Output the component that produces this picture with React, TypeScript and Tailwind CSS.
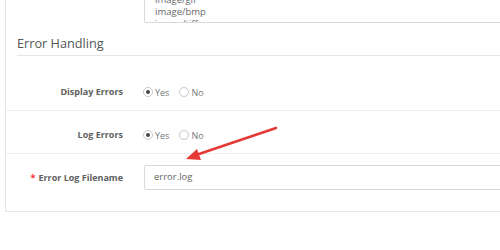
import React from 'react';

function Radio({ checked, label }: { checked?: boolean; label: string }) {
  return (
    <label className="flex items-center mr-[10px]">
      <span className="w-[10px] h-[10px] rounded-full border border-[#c8c8c8] bg-white flex items-center justify-center">
        {checked && <span className="w-[4px] h-[4px] rounded-full bg-[#444]"></span>}
      </span>
      <span className="ml-[2px] pt-[1px] text-[9px] text-[#777] leading-[13px]">{label}</span>
    </label>
  );
}

export default function App() {
  return (
    <div className="w-[500px] h-[250px] bg-white relative overflow-hidden font-['Open_Sans',sans-serif]">
      <div className="ml-[5px] w-[560px] border-l border-b border-[#e6e6e6]">
        {/* mime types textarea, scrolled */}
        <div className="flex">
          <div className="w-[138px] shrink-0"></div>
          <div className="flex-1 h-[23px] border-l border-b border-[#d9d9d9] rounded-bl-[2px] overflow-hidden pl-[10px]">
            <div className="-mt-[6.5px] text-[9.5px] leading-[12px] text-[#666]">
              <div>image/gif</div>
              <div>image/bmp</div>
              <div>image/tiff</div>
            </div>
          </div>
        </div>

        <div className="mx-[11px] mt-[11px] pb-[3px] border-b border-[#e6e6e6]">
          <h2 className="text-[12.7px] leading-[18px] text-[#555]">Error Handling</h2>
        </div>

        <div className="flex items-center pt-[29px] pb-[11px] border-b border-[#efefef]">
          <div className="w-[117px] shrink-0 text-right text-[9px] leading-[14px] font-bold text-[#606060]">Display Errors</div>
          <div className="flex ml-[20px]">
            <Radio checked label="Yes" />
            <Radio label="No" />
          </div>
        </div>

        <div className="flex items-center pt-[17px] pb-[11px] border-b border-[#efefef]">
          <div className="w-[117px] shrink-0 text-right text-[9px] leading-[14px] font-bold text-[#606060]">Log Errors</div>
          <div className="flex ml-[20px]">
            <Radio checked label="Yes" />
            <Radio label="No" />
          </div>
        </div>

        <div className="flex items-center pt-[11px] pb-[21px]">
          <div className="w-[117px] shrink-0 text-right text-[9px] leading-[14px] font-bold text-[#606060]">
            <span className="text-[#f33] mr-[3px]">*</span>Error Log Filename
          </div>
          <div className="ml-[21px] flex-1 h-[25px] border border-[#d9d9d9] rounded-[2px] flex items-center pl-[9px] text-[9.5px] text-[#666]">
            error.log
          </div>
        </div>
      </div>

      <svg className="absolute left-0 top-0" width="500" height="250" viewBox="0 0 500 250">
        <line x1="276" y1="128" x2="196" y2="155" stroke="#e53935" strokeWidth="2.6" strokeLinecap="round" />
        <polygon points="186,159 197,149 201,160" fill="#e53935" />
      </svg>
    </div>
  );
}
